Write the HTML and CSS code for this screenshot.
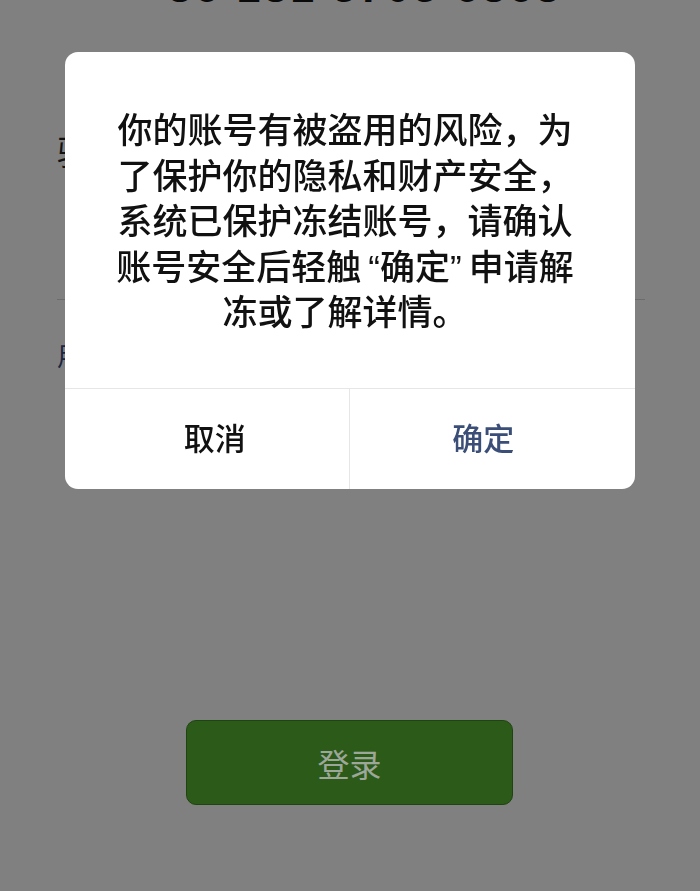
FILE: index.html
```html
<!DOCTYPE html>
<html lang="zh-CN">
<head>
    <meta charset="UTF-8">
    <meta name="viewport" content="width=device-width, initial-scale=1.0">
    <title>微信登录</title>
    <link rel="stylesheet" href="styles.css">
</head>
<body>
    <div class="page">
        <div class="phone">+86 181 5705 6868</div>

        <div class="form-row">
            <span class="label">验证码</span>
        </div>
        <div class="divider"></div>

        <div class="switch-link">用密码登录</div>

        <button class="login-btn">登录</button>
    </div>

    <!-- dialog over the dimmed page -->
    <div class="overlay">
        <div class="dialog">
            <div class="dialog-body">
                <p>你的账号有被盗用的风险，为<br>了保护你的隐私和财产安全，<br>系统已保护冻结账号，请确认<br>账号安全后轻触<span class="q-open">“</span>确定<span class="q-close">”</span>申请解<br>冻或了解详情。</p>
            </div>
            <div class="dialog-actions">
                <button class="action cancel">取消</button>
                <button class="action confirm">确定</button>
            </div>
        </div>
    </div>
</body>
</html>
```

FILE: styles.css
```css
* {
    margin: 0;
    padding: 0;
    box-sizing: border-box;
}

body {
    font-family: "Noto Sans CJK SC", "Liberation Sans", sans-serif;
    background: #808080;
    color: #111;
    width: 700px;
    height: 891px;
    overflow: hidden;
}

.page {
    padding: 0 55px 0 57px;
}

.phone {
    font-family: "Liberation Sans", sans-serif;
    font-weight: bold;
    font-size: 43px;
    line-height: 43px;
    letter-spacing: 3px;
    margin-top: -34px;
    text-align: center;
    color: #0a0a0a;
}

.form-row {
    margin-top: 112px;
    height: 60px;
    display: flex;
    align-items: center;
}

.label {
    font-size: 34px;
    line-height: 40px;
}

.divider {
    margin-top: 118px;
    height: 1px;
    background: #6c6c6c;
}

.switch-link {
    margin-top: 38px;
    font-size: 26px;
    line-height: 34px;
    color: #1b2540;
}

.login-btn {
    display: block;
    margin: 348px 0 0 129px;
    width: 327px;
    height: 85px;
    background: #2c5a19;
    border: 1px solid #1e4511;
    border-radius: 10px;
    color: #9ca79a;
    font-family: "Noto Sans CJK SC", sans-serif;
    font-size: 32px;
}

.overlay {
    position: fixed;
    inset: 0;
    display: flex;
    justify-content: center;
    align-items: flex-start;
    padding-top: 52px;
}

.dialog {
    width: 570px;
    background: #fff;
    border-radius: 13px;
    overflow: hidden;
}

.dialog-body {
    height: 336px;
    display: flex;
    align-items: center;
    justify-content: center;
    padding: 4px 50px 0 40px;
}

.dialog-body p {
    font-family: "Liberation Sans", "Noto Sans CJK SC", sans-serif;
    font-size: 35px;
    font-weight: 500;
    line-height: 45.5px;
    text-align: center;
    color: #111;
}

.q-open {
    margin-left: 7px;
}

.q-close {
    margin-right: 7px;
}

.dialog-actions {
    display: flex;
    height: 101px;
    border-top: 1px solid #e6e6e6;
}

.action {
    flex: 1;
    background: none;
    border: none;
    font-family: "Noto Sans CJK SC", sans-serif;
    font-size: 31px;
    font-weight: 500;
    padding-bottom: 6px;
}

.cancel {
    color: #111;
    border-right: 1px solid #e6e6e6;
    padding-left: 16px;
}

.confirm {
    color: #3b4e77;
    padding-right: 18px;
}
```
